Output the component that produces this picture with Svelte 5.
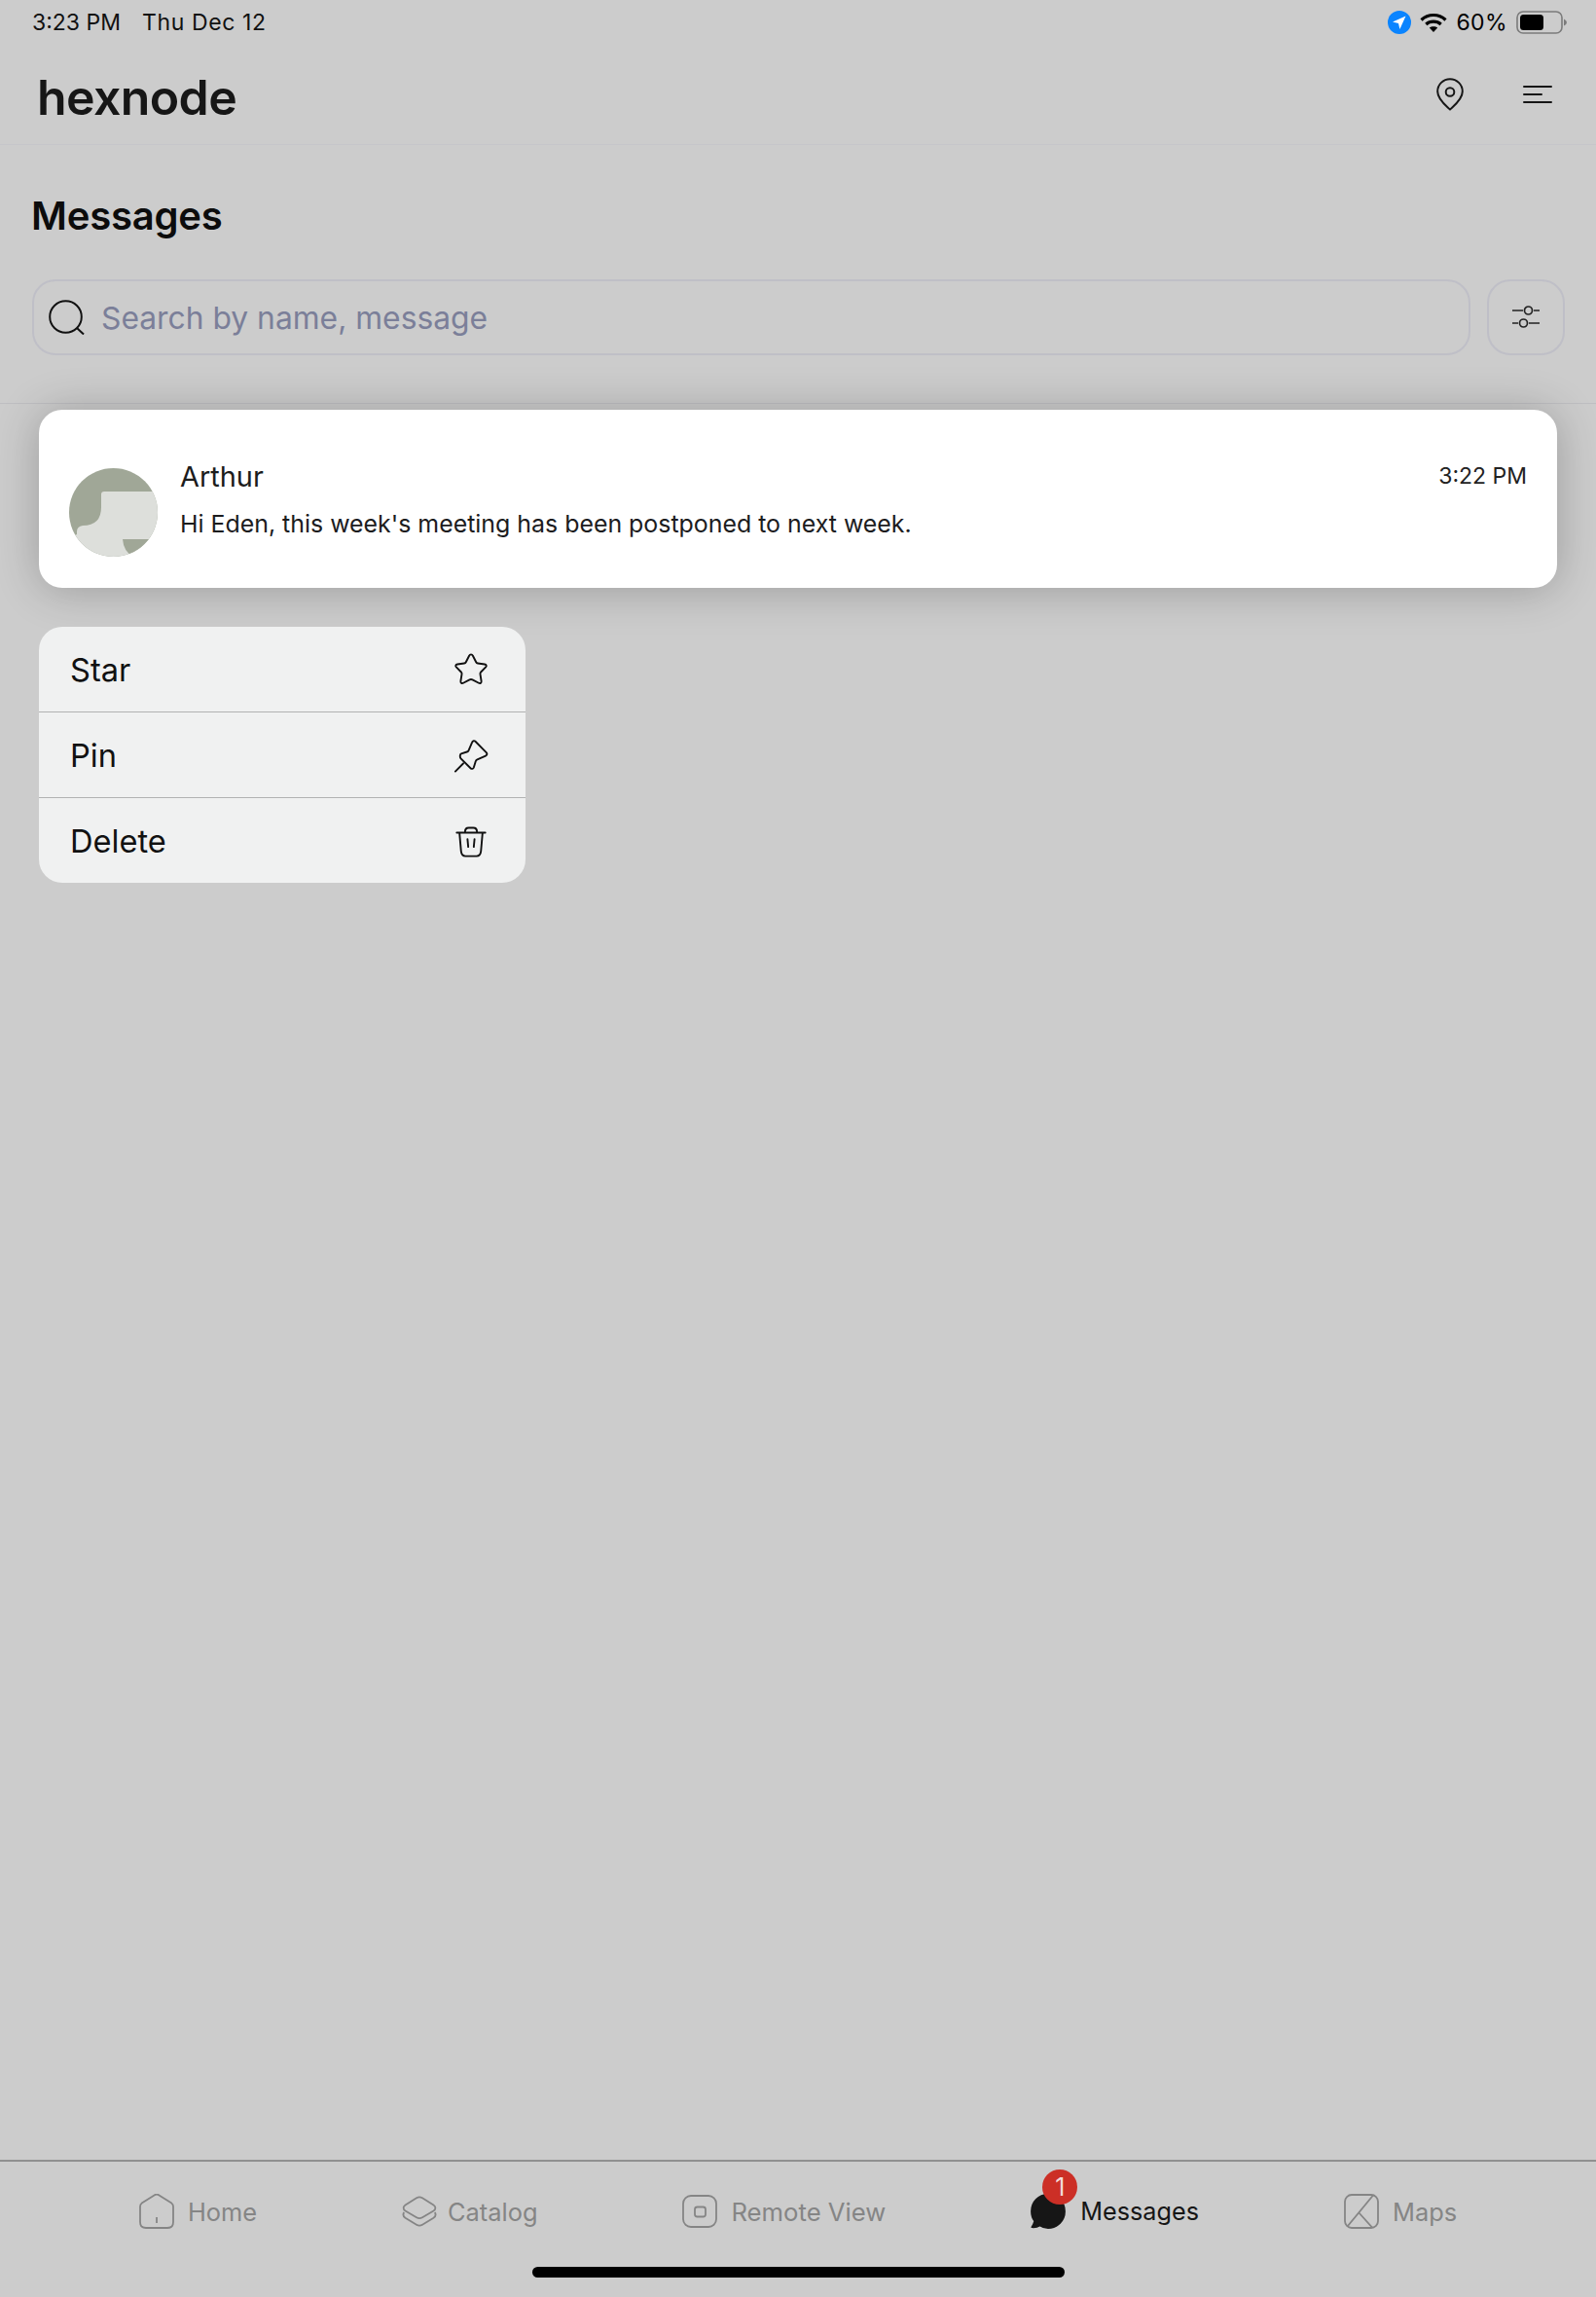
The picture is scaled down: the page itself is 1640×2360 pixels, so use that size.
<script>
  // Messages screen with a long-press context menu open on the first row
  const tabs = [
    { label: 'Home', icon: 'home' },
    { label: 'Catalog', icon: 'catalog' },
    { label: 'Remote View', icon: 'remote' },
    { label: 'Messages', icon: 'messages', active: true, badge: 1 },
    { label: 'Maps', icon: 'maps' }
  ];
  const actions = [
    { label: 'Star', icon: 'star' },
    { label: 'Pin', icon: 'pin' },
    { label: 'Delete', icon: 'trash' }
  ];
</script>

<div class="page">
  <div class="status">
    <div class="clock"><span>3:23 PM</span><span class="date">Thu Dec 12</span></div>
    <div class="sys">
      <svg class="loc" width="24" height="24" viewBox="0 0 24 24">
        <circle cx="12" cy="12" r="12" fill="#0a84ff" />
        <path d="M18.5 5.5 L5 11.6 L11 12.9 L12.4 19 Z" fill="#fff" />
      </svg>
      <svg class="wifi" width="28" height="20" viewBox="0 0 28 20" fill="none" stroke="#000" stroke-width="3.2">
        <path d="M1.5 7.5 C8.5 0.8 19.5 0.8 26.5 7.5" />
        <path d="M6.3 12 C10.5 8.2 17.5 8.2 21.7 12" />
        <path d="M14 20 L9.8 15.6 C12 13.8 16 13.8 18.2 15.6 Z" fill="#000" stroke="none" />
      </svg>
      <span class="pct">60%</span>
      <svg class="batt" width="52" height="24" viewBox="0 0 52 24">
        <rect x="1" y="1" width="46" height="22" rx="6" fill="none" stroke="#7b7b7b" stroke-width="1.6" />
        <rect x="4" y="4" width="24" height="16" rx="3.5" fill="#000" />
        <path d="M49 8.5 Q52 10 52 12 Q52 14 49 15.5 Z" fill="#7b7b7b" />
      </svg>
    </div>
  </div>

  <header class="top">
    <div class="logo">hexnode</div>
    <div class="top-icons">
      <svg width="28" height="34" viewBox="0 0 28 34" fill="none" stroke="#161616" stroke-width="2">
        <path d="M14 32.5 C11 29.5 1.2 22.5 1.2 14 C1.2 6.8 7 1.2 14 1.2 C21 1.2 26.8 6.8 26.8 14 C26.8 22.5 17 29.5 14 32.5 Z" stroke-linejoin="round" />
        <circle cx="14" cy="14.5" r="4.3" />
      </svg>
      <svg width="30" height="20" viewBox="0 0 30 20" fill="none" stroke="#161616" stroke-width="2" stroke-linecap="round">
        <path d="M1 2 H29 M1 10 H19 M1 18 H29" />
      </svg>
    </div>
  </header>

  <section class="toolbar">
    <h1>Messages</h1>
    <div class="search-row">
      <div class="search">
        <svg width="37" height="36" viewBox="0 0 37 36" fill="none" stroke="#111" stroke-width="2">
          <circle cx="17.5" cy="17.5" r="16.3" />
          <path d="M29 29 L36 35.5" />
        </svg>
        <span>Search by name, message</span>
      </div>
      <div class="filter">
        <svg width="30" height="24" viewBox="0 0 30 24" fill="none" stroke="#222" stroke-width="1.7">
          <path d="M1 5 H12 M23 5 H29 M1 18 H7 M18 18 H29" />
          <circle cx="17.5" cy="5" r="4" />
          <circle cx="12.5" cy="18" r="4" />
        </svg>
      </div>
    </div>
  </section>

  <main class="main">
    <article class="card">
      <svg class="avatar" width="91" height="91" viewBox="0 0 91 91">
        <defs><clipPath id="round"><circle cx="45.5" cy="45.5" r="45.5" /></clipPath></defs>
        <g clip-path="url(#round)">
          <rect width="91" height="91" fill="#a0a797" />
          <path d="M36 24 H91 V91 H0 V72 L8 68 V65 Q8 60 14 59 Q33 59 33 40 V27 Q33 24 36 24 Z" fill="#dddfdb" />
          <path d="M55 73 H91 V91 H66 Q56 86 55 73 Z" fill="#a0a797" />
        </g>
      </svg>
      <div class="body">
        <div class="line">
          <span class="name">Arthur</span>
          <span class="time">3:22 PM</span>
        </div>
        <p>Hi Eden, this week's meeting has been postponed to next week.</p>
      </div>
    </article>

    <ul class="menu">
      {#each actions as a}
        <li>
          <span>{a.label}</span>
          <svg width="36" height="36" viewBox="0 0 38 38" fill="none" stroke="#111" stroke-width="2" stroke-linejoin="round" stroke-linecap="round">
            {#if a.icon === 'star'}
              <path d="M19 2.5 C20 2.5 20.6 3.2 21 4 L24.5 10.8 C24.9 11.6 25.4 12 26.3 12.1 L33.8 13.2 C35.6 13.5 36.2 15 35 16.3 L29.7 21.6 C29 22.3 28.8 22.9 29 23.8 L30.2 31.4 C30.5 33.3 29.1 34.3 27.4 33.5 L20.6 30 C19.6 29.5 18.4 29.5 17.4 30 L10.6 33.5 C8.9 34.3 7.5 33.3 7.8 31.4 L9 23.8 C9.2 22.9 9 22.3 8.3 21.6 L3 16.3 C1.8 15 2.4 13.5 4.2 13.2 L11.7 12.1 C12.6 12 13.1 11.6 13.5 10.8 L17 4 C17.4 3.2 18 2.5 19 2.5 Z" />
            {:else if a.icon === 'pin'}
              <path d="M2 36.5 L10.5 28 M8 22.5 L18.5 33 C19.8 34.2 21.5 33.7 22 32.2 L24 25.5 C24.3 24.5 24.9 24 25.8 23.6 L34.8 19.6 C36.4 18.9 36.8 17.2 35.6 16 L24 4.2 C22.6 2.8 20.8 3.2 20.2 4.9 L16.5 13.5 C16.1 14.5 15.5 15 14.5 15.3 L8.4 17.2 C6.8 17.8 6.8 21.3 8 22.5 Z" />
            {:else}
              <path d="M3.5 10 H34.5 M12.5 9.5 C12.5 6.5 14 4.8 16.5 4.8 H21.5 C24 4.8 25.5 6.5 25.5 9.5 M6.5 10.5 L8.2 30 C8.5 33 10 35.5 13 35.5 H25 C28 35.5 29.5 33 29.8 30 L31.5 10.5 M15.2 17 L16 25.5 M22.8 17 L22 25.5" />
            {/if}
          </svg>
        </li>
      {/each}
    </ul>
  </main>

  <nav class="tabs">
    {#each tabs as t}
      <div class="tab" class:active={t.active} class:tight={t.icon === 'catalog'} class:wide={t.icon === 'remote'}>
        <span class="ico">
          <svg width="36" height="36" viewBox="0 0 36 36" fill="none" stroke="#858585" stroke-width="1.8" stroke-linejoin="round">
            {#if t.icon === 'home'}
              <path d="M1 13 C1 11.5 1.6 10.5 2.7 9.6 L15.5 1.4 C17 0.5 19 0.5 20.5 1.4 L33.3 9.6 C34.4 10.5 35 11.5 35 13 V29 C35 33 33 35 29 35 H7 C3 35 1 33 1 29 Z" />
              <path d="M18 24 V30" />
            {:else if t.icon === 'catalog'}
              <path d="M3.5 11.5 L15 4.2 C17 3 19 3 21 4.2 L32.5 11.5 C35 13.2 35 15.8 32.5 17.5 L21 24.3 C19 25.5 17 25.5 15 24.3 L3.5 17.5 C1 15.8 1 13.2 3.5 11.5 Z" />
              <path d="M2.2 19 C1 21 1.4 23.3 3.5 24.7 L15 31.7 C17 32.9 19 32.9 21 31.7 L32.5 24.7 C34.6 23.3 35 21 33.8 19" />
            {:else if t.icon === 'remote'}
              <rect x="1" y="2" width="34" height="32" rx="8" />
              <rect x="13" y="13.5" width="11" height="10" rx="2.5" />
            {:else if t.icon === 'messages'}
              <path d="M18 1 C8 1 1 8.5 1 18 C1 22 2.2 25.5 4.2 28 C3.6 30.5 2.6 32.5 1.4 34.2 C4.6 34.6 7.6 33.6 9.6 32.4 C12 34 15 35 18 35 C27.5 35 35 27.5 35 18 C35 8.5 27.5 1 18 1 Z" fill="#161616" stroke="#161616" />
            {:else}
              <rect x="1" y="1" width="34" height="34" rx="7" />
              <path d="M30 1.5 L3.5 33.5 M15 19 L29 34.5" />
            {/if}
          </svg>
          {#if t.badge}<b class="badge">{t.badge}</b>{/if}
        </span>
        <span>{t.label}</span>
      </div>
    {/each}
  </nav>
  <div class="home-bar"><i></i></div>
</div>

<style>
  :global(body) { margin: 0; background: #cccccc; }
  .page { width: 1640px; height: 2360px; display: flex; flex-direction: column; background: #cccccc; font-family: Inter, "Liberation Sans", sans-serif; color: #111; overflow: hidden; }

  .status { height: 46px; display: flex; justify-content: space-between; align-items: center; padding: 0 30px 0 33px; font-size: 23px; color: #111; box-sizing: border-box; }
  .clock { display: flex; gap: 22px; }
  .date { letter-spacing: 0.6px; }
  .sys { display: flex; align-items: center; }
  .wifi { margin-left: 9px; }
  .pct { margin-left: 9px; color: #000; letter-spacing: 0.4px; }
  .batt { margin-left: 9px; }

  .top { height: 103px; box-sizing: border-box; border-bottom: 1px solid #c6c6ca; display: flex; justify-content: space-between; align-items: center; padding: 0 45px 0 38px; }
  .logo { font-size: 50px; font-weight: 600; color: #161616; line-height: 1; letter-spacing: -0.6px; margin-top: 6px; }
  .top-icons { display: flex; align-items: center; gap: 61px; }

  .toolbar { height: 266px; box-sizing: border-box; border-bottom: 1px solid #bfbfc2; padding: 49px 32px 0 33px; }
  h1 { margin: 0 0 0 -1px; font-size: 40px; line-height: 48px; font-weight: 600; color: #0c0c0c; letter-spacing: -0.2px; }
  .search-row { display: flex; gap: 17px; margin-top: 41px; }
  .search { flex: 1; height: 78px; box-sizing: border-box; border: 2px solid #bfbfc7; border-radius: 24px; display: flex; align-items: center; gap: 17px; padding-left: 15px; font-size: 31.8px; color: #7b7f99; }
  .filter { width: 80px; height: 78px; box-sizing: border-box; border: 2px solid #bfbfc7; border-radius: 24px; display: flex; align-items: center; justify-content: center; }

  .main { flex: 1; padding: 6px 40px 0; }
  .card { height: 183px; box-sizing: border-box; background: #fff; border-radius: 24px; box-shadow: 0 2px 46px rgba(0, 0, 0, 0.24); display: flex; align-items: center; gap: 23px; padding: 0 31px; }
  .avatar { flex: none; margin-top: 28px; }
  .body { flex: 1; }
  .line { display: flex; justify-content: space-between; align-items: center; }
  .name { font-size: 28.9px; color: #1c1c1c; line-height: 33px; }
  .time { font-size: 23px; color: #222; }
  .body p { margin: 17px 0 0; font-size: 24.9px; line-height: 30px; color: #1c1c1e; }

  .menu { list-style: none; margin: 40px 0 0; padding: 0; width: 500px; background: #f0f1f1; border-radius: 24px; }
  .menu li { height: 87px; display: flex; justify-content: space-between; align-items: center; padding: 0 38px 0 32px; font-size: 32.6px; color: #111; }
  .menu li + li { border-top: 1px solid #b1b2b2; }

  .tabs { height: 106px; box-sizing: border-box; border-top: 2px solid #909090; display: flex; justify-content: center; gap: 149px; padding: 33px 0 0; }
  .tab { display: flex; align-items: center; gap: 14px; height: 36px; font-size: 25.4px; color: #858585; }
  .tab.tight { gap: 11px; }
  .tab.wide { font-size: 25.7px; }
  .tab.active { color: #161616; gap: 15px; font-size: 25.2px; }
  .ico { position: relative; display: block; width: 36px; height: 36px; }
  .badge { position: absolute; left: 12px; top: -25px; width: 36px; height: 36px; border-radius: 50%; background: #cc2f26; color: #f2dcda; font-size: 25px; font-weight: 400; display: flex; align-items: center; justify-content: center; }

  .home-bar { height: 35px; display: flex; justify-content: center; }
  .home-bar i { display: block; width: 547px; height: 11px; background: #000; border-radius: 6px; margin-top: 4px; }
</style>
